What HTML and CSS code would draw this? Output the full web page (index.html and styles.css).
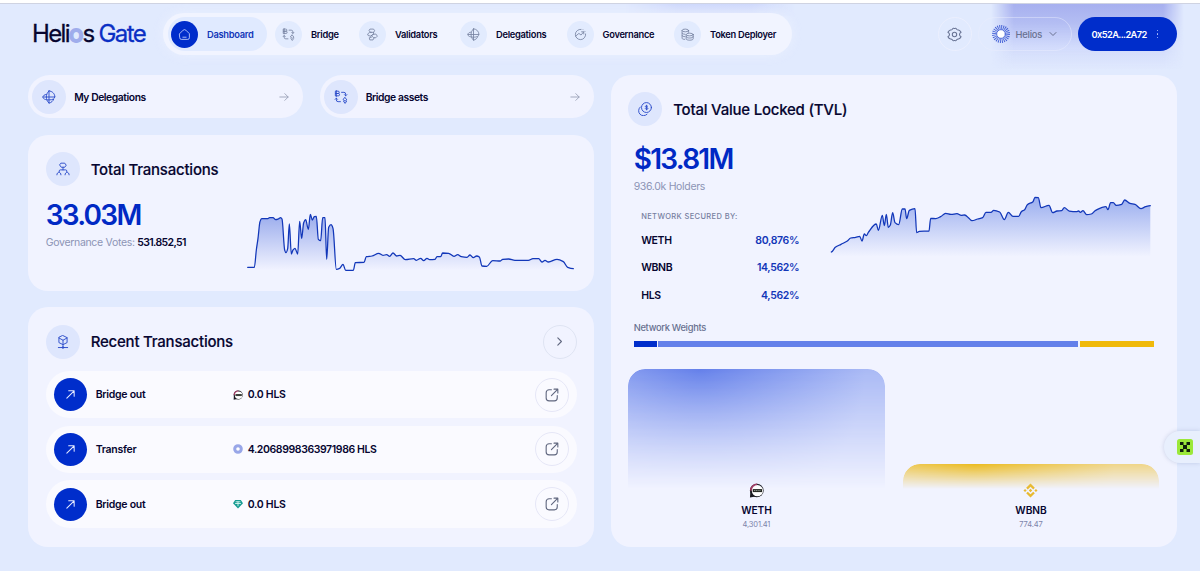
FILE: index.html
```
<!DOCTYPE html>
<html lang="en">
<head>
    <meta charset="UTF-8">
    <meta name="viewport" content="width=device-width, initial-scale=1.0">
    <title>Helios Gate</title>
    <link rel="stylesheet" href="styles.css">
</head>
<body>
    <!-- shared icons -->
    <svg class="sprite" width="0" height="0">
        <symbol id="i-home" viewBox="0 0 24 24"><path d="M3 10.5 9.5 4a4 4 0 0 1 5 0L21 10.5V18a3 3 0 0 1-3 3H6a3 3 0 0 1-3-3zM9 17h6"/></symbol>
        <symbol id="i-bridge" viewBox="0 0 24 24"><path d="M3 2h4a2 2 0 0 1 0 4H3zM3 6h4.500a2 2 0 0 1 0 4H3zM4 1v10M13 4h4a3 3 0 0 1 3 3v3M18 8l2 2 2-2M4 14v3a3 3 0 0 0 3 3h4M2 16l2-2 2 2M19 13l3 4-3 2-3-2zM16.500 19.500 19 23l2.500-3.500"/></symbol>
        <symbol id="i-validators" viewBox="0 0 24 24"><path d="M8 2h6l2 3-2 3H8L6 5zM10 8 7 8l-4 3 1 3 5 1 2-2M14 8v3l-5 4M13 12l5-1 3 4-3 3h-4l-3-3zM10 17l-4 1 1 4h6l2-4"/></symbol>
        <symbol id="i-delegations" viewBox="0 0 24 24"><path d="M12 1.500v21M12 1.500C18 2 22 6.500 22 12H2M7.500 7.500C4 8 1.500 10 1.500 12c0 3 4 5 10.500 5s10-2 10-5M12 1.500C9 4.500 7.500 8 7.500 12s1.500 7.500 4.500 10.500C16 21.500 19 19 20 16"/></symbol>
        <symbol id="i-governance" viewBox="0 0 24 24"><path d="M13 2.500a9.500 9.500 0 1 0 8.500 8.500M3 15l6-5 4 3 5-6M14 7h4v4M17 3.200l.1.100M20 6l.1.100"/></symbol>
        <symbol id="i-token" viewBox="0 0 24 24"><ellipse cx="8" cy="4.500" rx="6" ry="2.500"/><ellipse cx="16" cy="12" rx="6.500" ry="2.500"/><path d="M2 4.500V19c0 1 2 2 5 2M14 4.500V8M2 9.500c0 1 2 2 5 2M2 14c0 1 2 2 5 2M9.500 12v8c0 1.500 3 2.500 6.500 2.500s6.500-1 6.500-2.500v-8M9.500 16c0 1.500 3 2.500 6.500 2.500s6.500-1 6.500-2.500"/></symbol>
        <symbol id="i-gear" viewBox="0 0 24 24"><path d="M8.500 3.500Q10 1 12 2.500 14 1 15.500 3.500 16.500 5 18.500 4.800 21 5.500 22.500 8.500 20 10 20 12 20 14 22.500 15.500 21 18.500 18.500 19.200 16.500 19 15.500 20.500 14 23 12 21.500 10 23 8.500 20.500 7.500 19 5.500 19.200 3 18.500 1.500 15.500 4 14 4 12 4 10 1.500 8.500 3 5.500 5.500 4.800 7.500 5 8.500 3.500z"/><circle cx="12" cy="12" r="3.500"/></symbol>
        <symbol id="i-tree" viewBox="0 0 24 24"><path d="M9 2h6l2.500 3.500L15 9H9L6.500 5.500zM12 9v4.500M5.500 17v-1.500a2 2 0 0 1 2-2h9a2 2 0 0 1 2 2V17M1.500 22c0-6 7-6 7 0M15.500 22c0-6 7-6 7 0"/></symbol>
        <symbol id="i-cube" viewBox="0 0 24 24"><path d="M12 1 19 4.500v8.500L12 16.500 5 13V4.500zM5 5l7 4 7-4M12 9v12M4 21.500h16"/><circle cx="12" cy="21.500" r="1.500"/></symbol>
        <symbol id="i-coins" viewBox="0 0 24 24"><circle cx="14.500" cy="9.500" r="8.500"/><path d="M4 8.500A8.500 8.500 0 1 0 15.500 21M16.700 7.500c-1-1.500-4.200-1.200-4.200.5s4.500 1 4.500 3-3.700 2-4.700.3M14.700 5.500v8"/></symbol>
        <symbol id="i-arrow" viewBox="0 0 24 24"><path d="M2 12h20M14 4l8 8-8 8"/></symbol>
        <symbol id="i-up" viewBox="0 0 24 24"><path d="M4 20 20 4M8 4h12v12"/></symbol>
        <symbol id="i-external" viewBox="0 0 24 24"><path d="M11 3H7a5 5 0 0 0-5 5v9a5 5 0 0 0 5 5h9a5 5 0 0 0 5-5v-4M11 13 22 2M15.500 2H22v6.500"/></symbol>
        <symbol id="i-weth" viewBox="0 0 16 16"><circle cx="8.300" cy="8" r="7.300" fill="#1a1a22" stroke="none"/><path d="M1 15.500 1.500 9 7 14.500z" fill="#1a1a22" stroke="none"/><path d="M1 8A7.300 7.300 0 0 1 9 .7L8 3C5.500 3.500 4 5 3.500 8z" fill="#a13a62" stroke="none"/><circle cx="9" cy="8.200" r="6" fill="#fff" stroke="none"/><path d="M4 6.500h10v3.200H4z" fill="#20231f" stroke="none"/><path d="M5.300 8.100h7.500" stroke="#98a39a" stroke-width="1" stroke-dasharray="1.300 .6" stroke-linecap="butt"/></symbol>
        <symbol id="i-sun" viewBox="0 0 24 24"><circle cx="12" cy="12" r="9" fill="none" stroke="#4663d6" stroke-width="6" stroke-dasharray="1.150 1.206" stroke-linecap="butt"/><circle cx="12" cy="12" r="5.800" fill="#fff" stroke="#4663d6" stroke-width="1.200"/></symbol>
    </svg>

    <div class="glow glow-left"></div>
    <div class="glow glow-right"></div>

    <header class="header">
        <div class="logo">Heli<span class="logo-o">o</span>s <span class="logo-gate">Gate</span></div>
        <nav class="nav">
            <a class="nav-item active"><span class="nav-icon"><svg><use href="#i-home"/></svg></span>Dashboard</a>
            <a class="nav-item"><span class="nav-icon"><svg><use href="#i-bridge"/></svg></span>Bridge</a>
            <a class="nav-item"><span class="nav-icon"><svg><use href="#i-validators"/></svg></span>Validators</a>
            <a class="nav-item"><span class="nav-icon"><svg><use href="#i-delegations"/></svg></span>Delegations</a>
            <a class="nav-item"><span class="nav-icon"><svg><use href="#i-governance"/></svg></span>Governance</a>
            <a class="nav-item"><span class="nav-icon"><svg><use href="#i-token"/></svg></span>Token Deployer</a>
        </nav>
        <div class="actions">
            <button class="settings"><svg><use href="#i-gear"/></svg></button>
            <button class="network">
                <svg class="sun"><use href="#i-sun"/></svg>
                Helios
                <svg class="chevron" viewBox="0 0 8 8"><path d="M1 2.500 4 5.500 7 2.500"/></svg>
            </button>
            <button class="wallet">0x52A...2A72<span class="dots"><i></i><i></i><i></i></span></button>
        </div>
    </header>

    <main class="main">
        <div class="column">
            <div class="shortcuts">
                <a class="shortcut"><span class="round"><svg><use href="#i-delegations"/></svg></span>My Delegations<svg class="arrow"><use href="#i-arrow"/></svg></a>
                <a class="shortcut"><span class="round"><svg><use href="#i-bridge"/></svg></span>Bridge assets<svg class="arrow"><use href="#i-arrow"/></svg></a>
            </div>

            <section class="card total">
                <div class="card-head"><span class="round"><svg><use href="#i-tree"/></svg></span><h2>Total Transactions</h2></div>
                <div class="total-body">
                    <div>
                        <div class="big">33.03M</div>
                        <div class="sub votes">Governance Votes: <b>531.852,51</b></div>
                    </div>
                    <svg class="total-chart" id="total-chart" viewBox="30 45 996 210">
                        <defs><linearGradient id="fade1" x1="0" y1="0" x2="0" y2="1"><stop offset="0" stop-color="#002dcb" stop-opacity=".36"/><stop offset="1" stop-color="#002dcb" stop-opacity="0"/></linearGradient></defs>
                        <path class="area" fill="url(#fade1)"/>
                        <path class="line"/>
                    </svg>
                </div>
            </section>

            <section class="card recent">
                <div class="card-head"><span class="round"><svg><use href="#i-cube"/></svg></span><h2>Recent Transactions</h2>
                    <button class="outline more"><svg class="next" viewBox="0 0 8 8"><path d="M2.500.8 5.700 4 2.500 7.200"/></svg></button>
                </div>
                <div class="tx">
                    <span class="tx-icon"><svg><use href="#i-up"/></svg></span>
                    <span class="tx-type">Bridge out</span>
                    <span class="tx-amount"><svg><use href="#i-weth"/></svg>0.0 HLS</span>
                    <button class="outline"><svg><use href="#i-external"/></svg></button>
                </div>
                <div class="tx">
                    <span class="tx-icon"><svg><use href="#i-up"/></svg></span>
                    <span class="tx-type">Transfer</span>
                    <span class="tx-amount long"><svg viewBox="0 0 10 10"><circle cx="5" cy="5" r="3.300" fill="#fff" stroke="#98a6e8" stroke-width="3"/></svg>4.2068998363971986 HLS</span>
                    <button class="outline"><svg><use href="#i-external"/></svg></button>
                </div>
                <div class="tx">
                    <span class="tx-icon"><svg><use href="#i-up"/></svg></span>
                    <span class="tx-type">Bridge out</span>
                    <span class="tx-amount"><svg viewBox="0 0 10 10"><path d="M2.200 1h5.600L10 4.200 5 9.500 0 4.200z" fill="#169b92"/><path d="M3 2.800h4M5 2.800v4M2.500 4.500h5" stroke="#d9f5f1" stroke-width=".9"/></svg>0.0 HLS</span>
                    <button class="outline"><svg><use href="#i-external"/></svg></button>
                </div>
            </section>
        </div>

        <section class="card tvl">
            <div class="card-head"><span class="round"><svg><use href="#i-coins"/></svg></span><h2>Total Value Locked (TVL)</h2></div>
            <div class="tvl-top">
                <div class="tvl-stats">
                    <div class="big">$13.81M</div>
                    <div class="sub holders">936.0k Holders</div>
                    <div class="secured">
                        <div class="secured-title">NETWORK SECURED BY:</div>
                        <div class="secured-row"><span>WETH</span><b>80,876%</b></div>
                        <div class="secured-row"><span>WBNB</span><b>14,562%</b></div>
                        <div class="secured-row"><span>HLS</span><b>4,562%</b></div>
                    </div>
                </div>
                <svg class="tvl-chart" id="tvl-chart" viewBox="27 30 973 240">
                    <defs><linearGradient id="fade2" x1="0" y1="0" x2="0" y2="1"><stop offset="0" stop-color="#3d63dd" stop-opacity=".48"/><stop offset="1" stop-color="#3d63dd" stop-opacity="0"/></linearGradient></defs>
                    <path class="area" fill="url(#fade2)"/>
                    <path class="line"/>
                </svg>
            </div>
            <div class="weights-title">Network Weights</div>
            <div class="weights"><span class="w-hls"></span><span class="w-weth"></span><span class="w-wbnb"></span></div>
            <div class="assets">
                <div class="asset">
                    <div class="fill fill-weth"></div>
                    <svg><use href="#i-weth"/></svg>
                    <strong>WETH</strong>
                    <small>4,301.41</small>
                </div>
                <div class="asset">
                    <div class="fill fill-wbnb"></div>
                    <svg viewBox="0 0 16 16"><path d="M8 .5 12.600 5.100 10.900 6.800 8 3.900 5.100 6.800 3.400 5.100zM8 15.500 12.600 10.900 10.900 9.200 8 12.100 5.100 9.200 3.400 10.900zM8 6.200 9.800 8 8 9.800 6.200 8zM2.200 6.300 3.900 8 2.200 9.700.5 8zM13.800 6.300 15.500 8 13.800 9.700 12.100 8z" fill="#e8b931"/></svg>
                    <strong>WBNB</strong>
                    <small>774.47</small>
                </div>
            </div>
        </section>
    </main>

    <div class="widget">
        <svg viewBox="0 0 16 16"><rect width="16" height="16" rx="2.500" fill="#9be83a"/><path d="M3 3h3.500v3H3zM9.500 3H13v3H9.500zM6 6h4v4H6zM3 10h3.500v3H3zM9.500 10H13v3H9.500z" fill="#10200c"/></svg>
    </div>

    <script>
        // x,y pairs in viewBox units
        var totalPoints = "38 232 58 232 64 180 69 145 75 95 80 86 97 86 104 83 114 83 122 89 130 87 137 83 141 87 149 180 153 188 158 176 163 102 169 192 174 180 180 175 188 192 194 94 200 145 206 98 212 89 220 118 226 73 232 90 238 80 244 79 250 148 257 152 263 83 270 83 275 208 281 112 288 104 294 115 304 238 314 235 324 223 332 241 355 241 361 218 387 217 394 200 411 198 431 190 444 196 455 194 464 199 474 189 485 198 495 196 511 209 536 206 544 211 557 205 566 212 576 205 584 209 600 208 606 200 617 200 623 189 641 190 657 199 668 194 679 200 696 202 705 195 715 203 725 198 733 201 741 228 755 229 773 212 796 213 803 208 821 207 840 211 880 211 894 206 911 206 921 216 930 211 940 216 966 208 985 215 998 232 1015 236";
        var tvlPoints = "34 216 46 202 63 193 82 183 92 174 107 172 119 169 126 183 133 162 139 167 145 157 169 132 175 151 187 106 193 137 199 103 205 142 211 135 218 98 225 128 236 134 247 87 255 87 260 116 268 91 285 86 290 158 298 154 327 153 332 115 347 116 362 110 377 100 393 103 411 101 424 106 434 105 447 115 456 122 473 117 488 113 498 97 513 97 521 91 539 96 553 119 565 97 579 109 596 109 604 95 614 89 622 74 639 65 645 52 655 53 663 83 687 76 698 98 711 93 725 92 733 83 748 93 769 95 776 93 781 97 789 92 800 104 814 102 827 91 858 80 864 89 872 68 880 68 889 76 905 73 914 60 930 70 945 73 963 86 977 80 991 77";

        function drawChart(id, points, bottom) {
            var p = points.split(" ").map(Number);
            var d = "M" + p[0] + " " + p[1];
            for (var i = 2; i < p.length; i += 2) {
                var dx = (p[i] - p[i - 2]) * 0.35;
                // slope at a point is flat where the line turns
                var s1 = slope(p, i - 2), s2 = slope(p, i);
                d += "C" + [p[i - 2] + dx, p[i - 1] + s1 * dx, p[i] - dx, p[i + 1] - s2 * dx, p[i], p[i + 1]].join(" ");
            }
            var chart = document.getElementById(id);
            chart.querySelector(".line").setAttribute("d", d);
            chart.querySelector(".area").setAttribute("d", d + "V" + bottom + "H" + p[0] + "z");
        }

        function slope(p, i) {
            if (i < 2 || i > p.length - 4) return 0;
            var a = (p[i + 1] - p[i - 1]) / (p[i] - p[i - 2]);
            var b = (p[i + 3] - p[i + 1]) / (p[i + 2] - p[i]);
            return a * b <= 0 ? 0 : 2 * a * b / (a + b);
        }

        drawChart("total-chart", totalPoints, 240);
        drawChart("tvl-chart", tvlPoints, 230);
    </script>
</body>
</html>
```
FILE: styles.css
```
* {
    box-sizing: border-box;
}
body {
    margin: 0;
    height: 571px;
    overflow: hidden;
    position: relative;
    border-top: 3px solid #fff;
    background-color: #e1eafe;
    box-shadow: inset 0 1px 0 #cfd3e2;
    font-family: Inter, "Liberation Sans", sans-serif;
    color: #060530;
    white-space: nowrap;
}
svg {
    display: block;
    flex: none;
    fill: none;
    stroke-linecap: round;
    stroke-linejoin: round;
}
.sprite {
    position: absolute;
}
button {
    margin: 0;
    padding: 0;
    border: none;
    background: none;
    font-family: inherit;
}
.glow {
    position: absolute;
    top: 1px;
}
.glow-right {
    left: 985px;
    width: 205px;
    height: 66px;
    background: linear-gradient(#a7b0ef, #b4bef3 30%, rgba(200,209,250,0.6) 65%, transparent);
    -webkit-mask-image: linear-gradient(90deg, transparent 3%, #000 14%, #000 87%, transparent 97%);
    mask-image: linear-gradient(90deg, transparent 3%, #000 14%, #000 87%, transparent 97%);
}
.glow-left {
    left: 625px;
    width: 170px;
    height: 12px;
    background: linear-gradient(#cfd9fc, #dbe4fd);
    -webkit-mask-image: linear-gradient(90deg, transparent, #000 30%, #000 75%, transparent);
    mask-image: linear-gradient(90deg, transparent, #000 30%, #000 75%, transparent);
}

/* header */
.header {
    position: relative;
    display: flex;
    align-items: center;
    height: 42px;
    margin: 10px 23px 0 32px;
}
.logo {
    width: 131px;
    font-size: 24px;
    letter-spacing: -1.62px;
    line-height: 42px;
    -webkit-text-stroke: 0.3px;
}
.logo-o {
    color: #7f92e4;
    -webkit-text-stroke: 2px #9fadec;
    letter-spacing: -1px;
}
.logo-gate {
    color: #0a2fc4;
}
.nav {
    display: grid;
    grid-template-columns: 99px 79px 96px 101.5px 102.5px 117px;
    column-gap: 5px;
    align-items: center;
    width: 629px;
    height: 42px;
    padding-left: 5px;
    border-radius: 21px;
    background-color: #f1f4ff;
    box-shadow: 0 0 12px rgba(240,243,255,0.6);
}
.nav-item {
    display: flex;
    align-items: center;
    gap: 9px;
    height: 34px;
    padding-left: 3px;
    border-radius: 17px;
    font-size: 9.3px;
    font-weight: 600;
    letter-spacing: -0.28px;
}
.nav-icon {
    display: flex;
    align-items: center;
    justify-content: center;
    width: 27px;
    height: 27px;
    border-radius: 50%;
    background-color: #e2ebfe;
}
.nav-icon svg {
    width: 13px;
    height: 13px;
    stroke: #74809f;
    stroke-width: 1.5;
}
.active {
    background-color: #e0eaff;
    color: #1236b8;
}
.active .nav-icon {
    background-color: #002dcb;
}
.active .nav-icon svg {
    stroke: #cfd9ff;
}
.actions {
    display: flex;
    gap: 6px;
    margin-left: auto;
}
.settings {
    display: flex;
    align-items: center;
    justify-content: center;
    width: 34px;
    height: 34px;
    border: 1px solid rgba(240,241,253,0.7);
    border-radius: 50%;
}
.settings svg {
    width: 15px;
    height: 15px;
    stroke: #687394;
    stroke-width: 1.7;
}
.network {
    display: flex;
    align-items: center;
    width: 94px;
    height: 34px;
    padding-left: 13px;
    border: 1px solid rgba(235,237,252,0.45);
    border-radius: 17px;
    font-size: 9.3px;
    font-weight: 500;
    letter-spacing: -0.2px;
    color: #68708f;
}
.sun {
    width: 18px;
    height: 18px;
    margin-right: 6px;
}
.chevron {
    width: 8px;
    height: 8px;
    margin-left: 7px;
    stroke: #68708f;
}
.wallet {
    display: flex;
    align-items: center;
    width: 99.5px;
    height: 34px;
    padding-left: 14px;
    border-radius: 17px;
    background-color: #002dcb;
    color: #fff;
    font-size: 9.3px;
    font-weight: 600;
    letter-spacing: -0.6px;
}
.dots {
    display: grid;
    gap: 2px;
    margin-left: 10px;
}
.dots i {
    width: 1.500px;
    height: 1.500px;
    border-radius: 50%;
    background-color: #b9c7ff;
}

/* layout */
.main {
    position: relative;
    display: grid;
    grid-template-columns: 566px 566px;
    column-gap: 16.5px;
    height: 471.5px;
    margin: 20.4px 0 0 28.2px;
}
.column {
    display: flex;
    flex-direction: column;
    gap: 16.5px;
}
.card {
    border-radius: 20px;
    background-color: #f1f3ff;
}
.card-head {
    display: flex;
    align-items: center;
    gap: 11px;
    height: 34px;
}
h2 {
    margin: 0;
    font-size: 15px;
    font-weight: 500;
    letter-spacing: -0.22px;
    -webkit-text-stroke: 0.15px;
}
.round {
    display: flex;
    align-items: center;
    justify-content: center;
    width: 34px;
    height: 34px;
    border-radius: 50%;
    background-color: #dee6fd;
}
.round svg {
    width: 14px;
    height: 14px;
    stroke: #2c4cc9;
    stroke-width: 1.6;
}

/* shortcuts */
.shortcuts {
    display: grid;
    grid-template-columns: 1fr 1fr;
    gap: 17px;
}
.shortcut {
    display: flex;
    align-items: center;
    gap: 8px;
    height: 43px;
    padding: 0 14px 0 4px;
    border-radius: 22px;
    background-color: #f1f3ff;
    font-size: 10.3px;
    font-weight: 600;
    letter-spacing: -0.42px;
}
.arrow {
    width: 10px;
    height: 10px;
    margin-left: auto;
    stroke: #949ab1;
    stroke-width: 2;
}

/* total transactions */
.total {
    height: 156px;
    padding: 17.5px 17.5px 0;
}
.total-body {
    display: flex;
    justify-content: space-between;
}
.big {
    height: 30px;
    margin-top: 13.5px;
    font-size: 28px;
    font-weight: 600;
    letter-spacing: -1.75px;
    line-height: 30px;
    color: #0029c4;
}
.sub {
    font-size: 10.5px;
    color: #8c93b5;
}
.votes {
    margin-top: 6px;
    letter-spacing: -0.31px;
}
.sub b {
    font-weight: 600;
    letter-spacing: -0.65px;
    color: #060530;
}
.total-chart {
    width: 332px;
    height: 70px;
    margin-top: 18.5px;
}
.line {
    stroke: #1237b9;
    stroke-width: 3.8;
}

/* recent transactions */
.recent {
    height: 239.5px;
    padding: 17.5px 17.5px 0;
}
.recent .card-head {
    margin-bottom: 12px;
}
.outline {
    display: flex;
    align-items: center;
    justify-content: center;
    width: 34px;
    height: 34px;
    margin-left: auto;
    border: 1px solid #e6e7f7;
    border-radius: 50%;
}
.outline svg {
    width: 14px;
    height: 14px;
    stroke: #60677f;
    stroke-width: 1.9;
}
.outline .next {
    width: 9px;
    height: 9px;
    stroke-width: 1;
}
.more {
    border-color: #dfe4f3;
}
.tx {
    display: flex;
    align-items: center;
    height: 47.6px;
    margin-bottom: 7.2px;
    padding: 0 8px;
    border-radius: 24px;
    background-color: #fafaff;
    font-size: 10.5px;
    font-weight: 600;
    letter-spacing: -0.28px;
}
.tx-icon {
    display: flex;
    align-items: center;
    justify-content: center;
    width: 33px;
    height: 33px;
    border-radius: 50%;
    background-color: #002dcb;
}
.tx-icon svg {
    width: 11px;
    height: 11px;
    stroke: #e7ecff;
    stroke-width: 2.2;
}
.tx-type {
    width: 137px;
    margin-left: 9px;
}
.tx-amount {
    display: flex;
    align-items: center;
    gap: 5px;
}
.long {
    letter-spacing: -0.4px;
}
.tx-amount svg {
    width: 10px;
    height: 10px;
}

/* total value locked */
.tvl {
    padding: 17px 17.5px 0;
}
.tvl-top {
    display: flex;
    justify-content: space-between;
    height: 196px;
    padding: 0 5.500px;
}
.tvl .big {
    margin-top: 17.5px;
}
.holders {
    margin-top: 6px;
    letter-spacing: -0.33px;
}
.secured {
    width: 158px;
    margin: 19px 0 0 7.5px;
}
.secured-title {
    margin-bottom: 5px;
    font-size: 7.5px;
    font-weight: 500;
    line-height: 10px;
    letter-spacing: 0.37px;
    color: #777f9f;
}
.secured-row {
    display: flex;
    align-items: center;
    justify-content: space-between;
    height: 27.300px;
    font-size: 10.5px;
    font-weight: 600;
    letter-spacing: -0.35px;
}
.secured-row b {
    font-weight: 600;
    color: #1236b8;
}
.tvl-chart {
    width: 324.300px;
    height: 80px;
    margin-top: 63.5px;
}
.weights-title {
    height: 12px;
    padding-left: 5.500px;
    font-size: 9.3px;
    font-weight: 500;
    line-height: 12px;
    letter-spacing: -0.28px;
    color: #68708f;
}
.weights {
    display: grid;
    grid-template-columns: 23px 420px 74px;
    column-gap: 1.500px;
    height: 6px;
    margin: 7px 0 0 5.500px;
}
.w-hls {
    background-color: #002dcb;
}
.w-weth {
    background-color: #6480ea;
}
.w-wbnb {
    background-color: #f0b90b;
}
.assets {
    display: grid;
    grid-template-columns: 1fr 1fr;
    gap: 18px;
    margin-top: 21px;
}
.asset {
    display: flex;
    flex-direction: column;
    align-items: center;
    justify-content: flex-end;
    height: 162.5px;
}
.fill {
    width: 100%;
    border-radius: 17px 17px 0 0;
    -webkit-mask-image: linear-gradient(#000, transparent);
    mask-image: linear-gradient(#000, transparent);
}
.fill-weth {
    height: 120px;
    margin-bottom: -6px;
    background: radial-gradient(circle at 28% 0, #6480ea, #a9b9f5 75%);
}
.fill-wbnb {
    height: 25px;
    margin-bottom: -6px;
    background: radial-gradient(circle at 28% 0, #ebbb20, #efd589 75%);
}
.asset svg {
    width: 15px;
    height: 15px;
}
.asset strong {
    margin-top: 6px;
    font-size: 10.2px;
    font-weight: 600;
    line-height: 13px;
    letter-spacing: -0.1px;
}
.asset small {
    margin-top: 1px;
    font-size: 7.5px;
    line-height: 13px;
    letter-spacing: -0.15px;
    color: #7c84aa;
}

/* side tab over the page edge */
.widget {
    position: absolute;
    top: 428px;
    right: 0;
    width: 36px;
    height: 32px;
    padding: 8px 0 0 13px;
    border-radius: 16px 0 0 16px;
    background-color: #e8effd;
    box-shadow: 0 0 4px rgba(110,125,170,0.3);
}
.widget svg {
    width: 16px;
    height: 16px;
}
```
